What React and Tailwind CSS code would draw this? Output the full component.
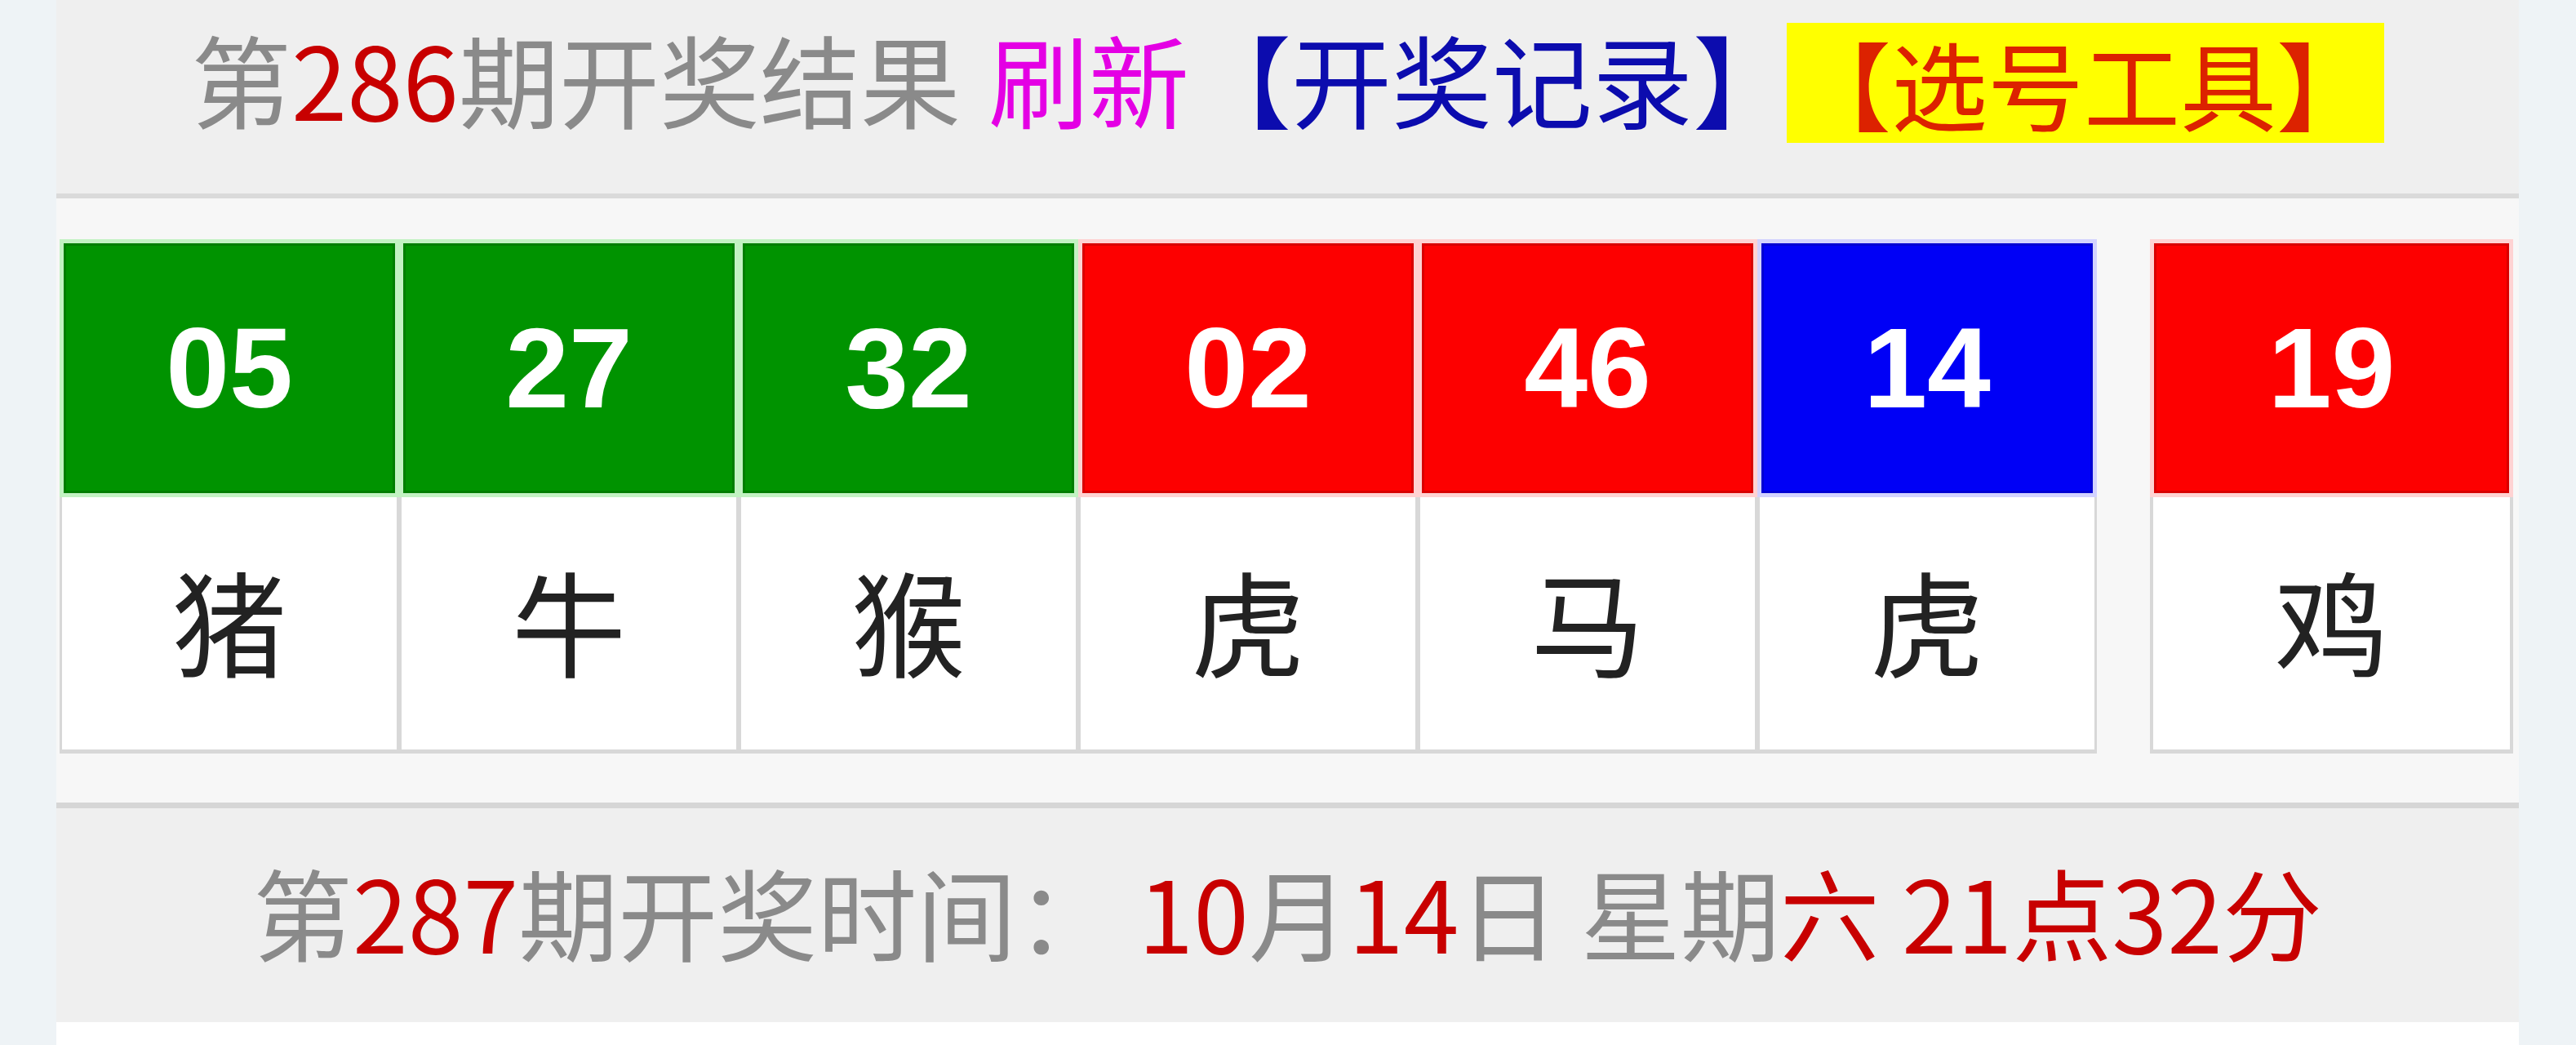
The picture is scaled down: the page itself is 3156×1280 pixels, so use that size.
import React from "react";

const balls = [
  { n: "05", z: "猪", c: "green" },
  { n: "27", z: "牛", c: "green" },
  { n: "32", z: "猴", c: "green" },
  { n: "02", z: "虎", c: "red" },
  { n: "46", z: "马", c: "red" },
  { n: "14", z: "虎", c: "blue" },
];

const numCls = {
  green: "bg-[#009300] border-[#c2f2c2]",
  red: "bg-[#fd0000] border-[#ffd2d2]",
  blue: "bg-[#0000f6] border-[#d2d2ff]",
};

function Cell({ n, z, c, wide }) {
  return (
    <div className={wide ? "w-[445px] flex flex-col" : "w-[416px] flex flex-col"}>
      <div
        className={
          "h-[316px] border-[5px] flex items-center justify-center shadow-[inset_0_0_0_3px_rgba(0,0,0,0.14)] " +
          numCls[c]
        }
      >
        <span className="font-['Liberation_Sans',Arial,sans-serif] font-bold text-[140px] leading-none text-white">
          {n}
        </span>
      </div>
      <div
        className={
          "h-[314px] bg-white border-b-[5px] border-[#d8d8d8] flex items-center justify-center pb-[12px] " +
          (wide ? "border-x-[4px]" : "border-x-[3px]")
        }
      >
        <span className="text-[140px] leading-none text-[#222222]">{z}</span>
      </div>
    </div>
  );
}

export default function App() {
  return (
    <div className="w-[3156px] h-[1280px] bg-[#eef3f6] flex font-['Noto_Sans_CJK_SC',sans-serif]">
      <div className="ml-[69px] w-[3017px] h-[1280px] flex flex-col bg-white">
        <div className="h-[237px] bg-[#efefef] flex items-center justify-center pb-[49px] text-[123px] leading-none whitespace-nowrap">
          <span className="text-[#8a8a8a]">
            第<span className="text-[#c80000]">286</span>期开奖结果
          </span>
          <span className="ml-[34px] text-[#e400e4]">刷新</span>
          <span className="ml-[2px] text-[#0c0cae]">【开奖记录】</span>
          <span className="-ml-[8px] mt-[14px] h-[147px] pl-[10px] pr-[14px] bg-[#ffff00] inline-flex items-center text-[118px] text-[#dc2200]">
            【选号工具】
          </span>
        </div>
        <div className="h-[6px] bg-[#dadada]" />
        <div className="bg-[#f7f7f7] pt-[50px] pb-[60px] pl-[4px] flex">
          <div className="flex">
            {balls.map((b, i) => (
              <Cell key={i} {...b} />
            ))}
          </div>
          <div className="ml-[65px]">
            <Cell n="19" z="鸡" c="red" wide />
          </div>
        </div>
        <div className="h-[7px] bg-[#d6d6d6]" />
        <div className="h-[262px] bg-[#efefef] flex items-center justify-center pb-[13px] text-[122px] leading-none whitespace-nowrap text-[#8a8a8a]">
          <span>
            第<span className="text-[#c80000]">287</span>期开奖时间：
            <span className="text-[#c80000]"> 10</span>月
            <span className="text-[#c80000]">14</span>日 星期
            <span className="text-[#c80000]">六 21点32分</span>
          </span>
        </div>
        <div className="flex-1 bg-white" />
      </div>
    </div>
  );
}
